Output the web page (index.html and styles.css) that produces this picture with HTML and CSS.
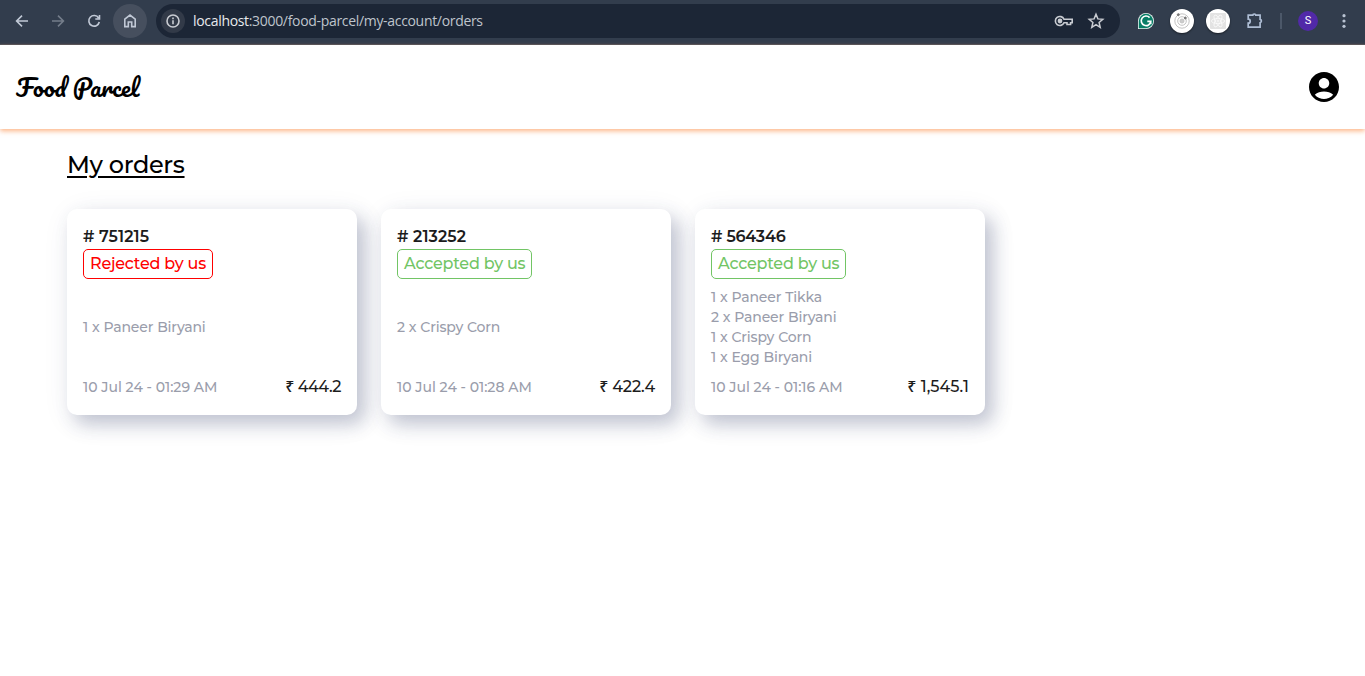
FILE: index.html
```html
<!DOCTYPE html>
<html lang="en">
<head>
<meta charset="utf-8">
<title>Food Parcel</title>
<link rel="stylesheet" href="styles.css">
</head>
<body>
<div class="toolbar">
  <nav class="nav">
    <span class="nav-btn"><svg width="16" height="16" viewBox="0 0 16 16"><path d="M14 8H3M8 2.6 2.6 8 8 13.4"/></svg></span>
    <span class="nav-btn dim"><svg width="16" height="16" viewBox="0 0 16 16"><path d="M2 8h11M8 2.6 13.4 8 8 13.4"/></svg></span>
    <span class="nav-btn"><svg width="16" height="16" viewBox="0 0 16 16"><path d="M12.6 5A5.3 5.3 0 1 0 13.3 9M13.5 2v4H9.3"/></svg></span>
    <span class="nav-btn home"><svg width="16" height="16" viewBox="0 0 16 16"><path d="M2.8 6.2 8 2.1l5.2 4.1v7.4H9.7V9H6.3v4.6H2.8z"/></svg></span>
  </nav>
  <div class="address">
    <span class="info"><svg width="16" height="16" viewBox="0 0 16 16"><circle cx="8" cy="8" r="6"/><path d="M8 7.2v4M8 4.6v1.6"/></svg></span>
    <span class="url"><b>localhost</b>:3000/food-parcel/my-account/orders</span>
    <svg class="key" width="20" height="16" viewBox="0 0 20 16"><path d="M10 6.2A4.5 4.5 0 1 0 10 9.8h3v1.7h3.6V9.8h1.6V6.2z"/><circle cx="6" cy="8" r="1.6" fill="currentColor"/></svg>
    <svg class="star" width="18" height="18" viewBox="0 0 18 18"><path d="m9 2.3 1.9 4.6 4.9.4-3.7 3.2 1.1 4.8L9 12.7l-4.2 2.6 1.1-4.8-3.7-3.2 4.9-.4z"/></svg>
  </div>
  <div class="tools">
    <svg class="grammar" width="16" height="16" viewBox="0 0 16 16"><path d="M8 0a8 8 0 1 1 0 16H0V8a8 8 0 0 1 8-8z" fill="#e9f4f1"/><path d="M8 .8a7.2 7.2 0 1 1 0 14.4H.8V8A7.2 7.2 0 0 1 8 .8z" fill="#087d66"/><path d="M11.6 4.6A4.8 4.8 0 1 0 12.8 8.4H9.3M12.7 8.3v3" fill="none" stroke="#fff" stroke-width="1.7"/></svg>
    <span class="disc"><svg width="20" height="20" viewBox="0 0 20 20" fill="none" stroke="#c4c4c4"><circle cx="10" cy="10" r="7.2"/><circle cx="10" cy="10" r="4.3"/><circle cx="10" cy="10" r="2" fill="#ccc"/><circle cx="6.3" cy="3.7" r="1" fill="#777" stroke="#777"/><circle cx="13.3" cy="7" r="1" fill="#777" stroke="#777"/></svg></span>
    <span class="disc"><svg width="16" height="16" viewBox="0 0 16 16" fill="none" stroke="#fafafa" stroke-width=".8"><rect width="16" height="16" rx="1" fill="#e3e3e3" stroke="none"/><ellipse cx="8" cy="8" rx="6.6" ry="2.6"/><ellipse cx="8" cy="8" rx="6.6" ry="2.6" transform="rotate(60 8 8)"/><ellipse cx="8" cy="8" rx="6.6" ry="2.6" transform="rotate(120 8 8)"/><circle cx="8" cy="8" r="1"/></svg></span>
    <svg class="puzzle" width="18" height="18" viewBox="0 0 18 18"><path d="M2.2 3.2h4.6a1.5 1.2 0 0 1 3 0h4.3v4.2a1.7 1.7 0 0 1 0 3.3v4.5H2.2v-4a2 2 0 0 0 0-4z"/></svg>
    <span class="divider"></span>
    <span class="profile">S</span>
    <svg class="menu" width="4" height="16" viewBox="0 0 4 16"><circle cx="2" cy="2.7" r="1.6"/><circle cx="2" cy="8" r="1.6"/><circle cx="2" cy="13.3" r="1.6"/></svg>
  </div>
</div>
<header class="site-header">
  <div class="logo">Food Parcel</div>
  <svg class="account" width="36" height="36" viewBox="0 0 24 24"><path d="M12 2C6.48 2 2 6.48 2 12s4.48 10 10 10 10-4.48 10-10S17.52 2 12 2zm0 4c1.93 0 3.5 1.57 3.5 3.5S13.93 13 12 13s-3.5-1.57-3.5-3.5S10.07 6 12 6zm0 14c-2.03 0-4.43-.82-6.14-2.88C7.55 15.8 9.68 15 12 15s4.45.8 6.14 2.12C16.43 19.18 14.03 20 12 20z"/></svg>
</header>
<main class="content">
  <h1><span>My orders</span></h1>
  <section class="orders">
    <article class="card">
      <h2>#&nbsp;751215</h2>
      <span class="status rejected">Rejected by us</span>
      <ul class="items"><li>1 x Paneer Biryani</li></ul>
      <footer><span class="date">10 Jul 24 - 01:29 AM</span><span class="price"><span class="rupee">₹</span> 444.2</span></footer>
    </article>
    <article class="card">
      <h2>#&nbsp;213252</h2>
      <span class="status accepted">Accepted by us</span>
      <ul class="items"><li>2 x Crispy Corn</li></ul>
      <footer><span class="date">10 Jul 24 - 01:28 AM</span><span class="price"><span class="rupee">₹</span> 422.4</span></footer>
    </article>
    <article class="card">
      <h2>#&nbsp;564346</h2>
      <span class="status accepted">Accepted by us</span>
      <ul class="items"><li>1 x Paneer Tikka</li><li>2 x Paneer Biryani</li><li>1 x Crispy Corn</li><li>1 x Egg Biryani</li></ul>
      <footer><span class="date">10 Jul 24 - 01:16 AM</span><span class="price"><span class="rupee">₹</span> 1,545.1</span></footer>
    </article>
  </section>
</main>
</body>
</html>
```
FILE: styles.css
```css
* { box-sizing: border-box; }
body { margin: 0; height: 676px; overflow: hidden; background: #fff; color: #000; font-family: Montserrat, Inter, sans-serif; }
.toolbar { height: 45px; padding: 0 8px 3px 5px; background: #323d4d; border-bottom: 1px solid #48505c; display: flex; align-items: center; }
.nav { display: flex; gap: 2px; }
.nav-btn { width: 34px; height: 34px; border-radius: 50%; display: flex; align-items: center; justify-content: center; color: #c1c9d6; }
.nav-btn svg, .info svg, .key, .star, .puzzle { fill: none; stroke: currentColor; stroke-width: 1.6; }
.nav .dim { color: #747d8a; }
.home { background: #464f5e; }
.address { width: 964px; height: 34px; margin-left: 9px; padding: 0 15px 0 5px; border-radius: 17px; background: #1c2636; display: flex; align-items: center; color: #c9ccd2; }
.info { width: 24px; height: 24px; border-radius: 50%; background: #323a48; display: flex; align-items: center; justify-content: center; }
.url { margin-left: 8px; flex: 1; font: 14px/20px "Open Sans", sans-serif; letter-spacing: -0.32px; color: #bfc4cc; }
.url b { font-weight: 400; color: #e8eaed; }
.star { margin-left: 13px; stroke-width: 1.5; }
.tools { flex: 1; display: flex; align-items: center; padding-left: 18px; }
.disc { width: 24px; height: 24px; border-radius: 50%; background: #fff; display: flex; align-items: center; justify-content: center; box-shadow: 0 1px 2px rgba(0, 0, 0, .5); margin-left: 16px; }
.disc + .disc { margin-left: 12px; }
.puzzle { margin-left: 16px; color: #aebdd4; stroke-width: 1.7; }
.divider { width: 2px; height: 16px; margin-left: 16px; background: #4c5869; }
.profile { width: 20px; height: 20px; margin-left: 16px; border-radius: 50%; background: #5129a8; color: #fff; text-align: center; font: 11px/20px Roboto, sans-serif; }
.menu { margin-left: 24px; fill: #b9c3d2; }
.site-header { height: 84px; padding: 0 23px 0 16px; display: flex; align-items: center; justify-content: space-between; box-shadow: 0 2px 5px rgba(252, 128, 50, .6); }
.logo { font: 400 24px/40px Pacifico, "Liberation Serif", cursive; }
.content { padding: 16px 67px; }
h1 { margin: 0; font-size: 24px; line-height: 40px; font-weight: 500; letter-spacing: -0.33px; text-decoration: underline; text-decoration-thickness: 2px; text-underline-offset: 3px; }
.orders { margin-top: 24px; display: flex; gap: 24px; }
.card { width: 290px; height: 206px; padding: 16px; border-radius: 10px; background: #fff; display: flex; flex-direction: column; align-items: flex-start; box-shadow: 8px 9px 18px rgba(60, 70, 112, .27), 4px 6px 30px rgba(60, 70, 112, .09); }
h2 { margin: 0; font-size: 16px; line-height: 24px; font-weight: 600; color: #1c1c1c; }
.card:first-child h2 { letter-spacing: 0.1px; }
.card:nth-child(2) h2 { letter-spacing: 0.1px; }
.card:nth-child(3) h2 { letter-spacing: -0.2px; }
.status { height: 30px; padding: 0 6px; border: 1px solid; border-radius: 5px; font-size: 16px; font-weight: 500; letter-spacing: -0.22px; line-height: 27px; }
.rejected { color: #f00; }
.accepted { color: #72c565; }
.items { flex: 1; margin: 0; padding: 0; list-style: none; display: flex; flex-direction: column; justify-content: center; font-size: 14px; line-height: 20px; font-weight: 500; letter-spacing: -0.15px; word-spacing: 0.3px; color: #9a9dab; }
footer { width: 100%; height: 24px; display: flex; align-items: center; justify-content: space-between; }
.date { font-size: 14px; font-weight: 500; color: #9a9dab; }
.price { font-size: 16px; line-height: 24px; padding-bottom: 1px; font-weight: 500; letter-spacing: -0.45px; color: #1c1c1c; }
.card:nth-child(2) .price { letter-spacing: -0.15px; }
.card:nth-child(3) .price { letter-spacing: 0.05px; }
.rupee { font-family: "Noto Sans", sans-serif; line-height: 1; }
```
